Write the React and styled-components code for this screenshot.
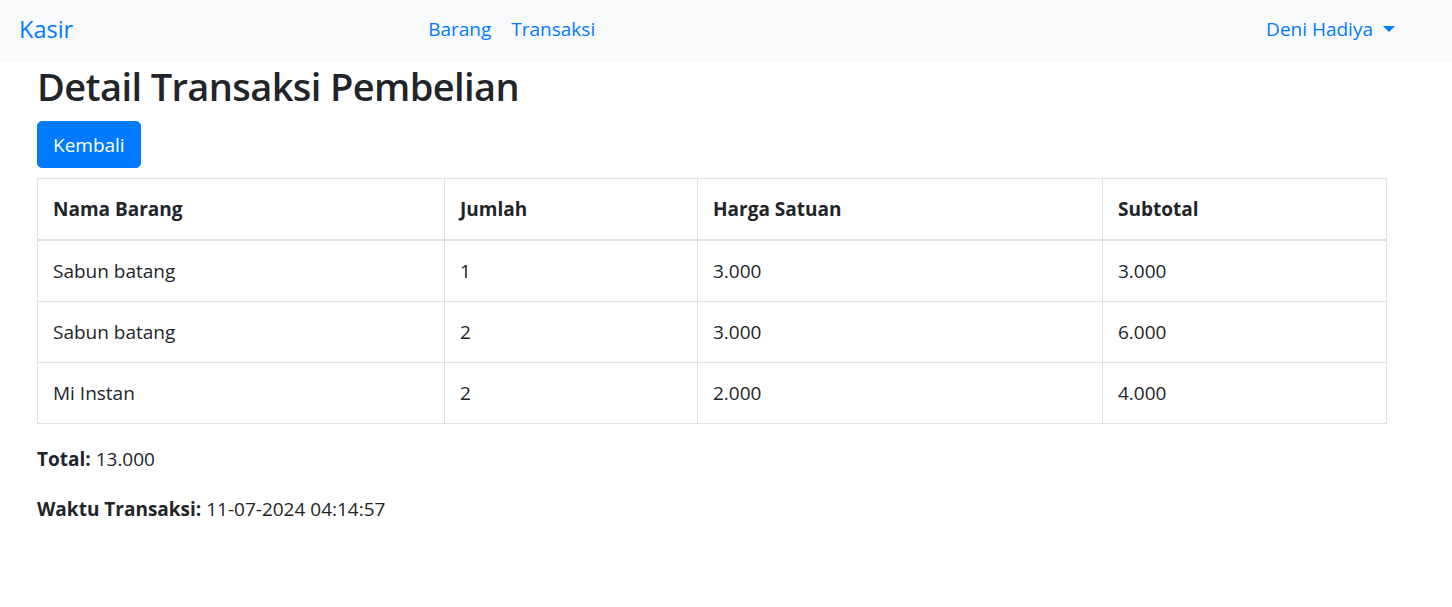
import React from 'react';
import styled, { createGlobalStyle } from 'styled-components';

const GlobalStyle = createGlobalStyle`
  body {
    margin: 0;
    font-family: 'Segoe UI', 'Open Sans', 'Noto Sans', Arial, sans-serif;
    font-size: 19px;
    line-height: 30px;
    color: #212529;
    background: #fff;
  }
`;

const Navbar = styled.nav`
  display: flex;
  align-items: center;
  height: 62px;
  padding: 0 20px 5px 19px;
  background: #f8f9fa;
  box-sizing: border-box;
`;

const Brand = styled.a`
  font-size: 23.5px;
  line-height: 36px;
  color: #007bff;
  text-decoration: none;
`;

const NavList = styled.ul`
  display: flex;
  list-style: none;
  margin: 0 0 0 ${(p) => p.offset || 0}px;
  padding: 0;
`;

const NavLink = styled.a`
  display: block;
  padding: 8px 10px;
  color: #007bff;
  text-decoration: none;
`;

const Dropdown = styled(NavLink)`
  margin-left: auto;
  margin-right: 27px;
  &::after {
    content: '';
    display: inline-block;
    margin-left: 10px;
    vertical-align: 4px;
    border-top: 6px solid;
    border-right: 6px solid transparent;
    border-left: 6px solid transparent;
  }
`;

const Main = styled.main`
  padding: 0 66px 0 37px;
`;

const Title = styled.h2`
  margin: 0 0 11px;
  font-size: 38px;
  font-weight: 600;
  letter-spacing: -0.6px;
  line-height: 48px;
`;

const Button = styled.button`
  display: inline-block;
  margin-bottom: 10px;
  padding: 7.5px 15px;
  font: inherit;
  line-height: 30px;
  color: #fff;
  background: #007bff;
  border: 1px solid #007bff;
  border-radius: 5px;
`;

const Table = styled.table`
  width: 100%;
  margin-bottom: 20px;
  table-layout: fixed;
  border-collapse: collapse;
  border: 1px solid #dee2e6;
`;

const Th = styled.th`
  box-sizing: border-box;
  width: ${(p) => p.w}px;
  padding: 15px;
  text-align: left;
  font-weight: 700;
  border: 1px solid #dee2e6;
  border-bottom: 2px solid #dee2e6;
`;

const Td = styled.td`
  padding: 15px;
  border: 1px solid #dee2e6;
`;

const Info = styled.p`
  margin: 0 0 20px;
`;

const rows = [
  ['Sabun batang', '1', '3.000', '3.000'],
  ['Sabun batang', '2', '3.000', '6.000'],
  ['Mi Instan', '2', '2.000', '4.000'],
];

export default function App() {
  return (
    <>
      <GlobalStyle />
      <Navbar>
        <Brand href="#">Kasir</Brand>
        <NavList offset={345}>
          <li><NavLink href="#">Barang</NavLink></li>
          <li><NavLink href="#">Transaksi</NavLink></li>
        </NavList>
        <Dropdown href="#">Deni Hadiya</Dropdown>
      </Navbar>
      <Main>
        <Title>Detail Transaksi Pembelian</Title>
        <Button type="button">Kembali</Button>
        <Table>
          <thead>
            <tr>
              <Th w={407}>Nama Barang</Th>
              <Th w={253}>Jumlah</Th>
              <Th w={405}>Harga Satuan</Th>
              <Th w={284}>Subtotal</Th>
            </tr>
          </thead>
          <tbody>
            {rows.map((r, i) => (
              <tr key={i}>
                {r.map((c, j) => (
                  <Td key={j}>{c}</Td>
                ))}
              </tr>
            ))}
          </tbody>
        </Table>
        <Info><strong>Total:</strong> 13.000</Info>
        <Info><strong>Waktu Transaksi:</strong> 11-07-2024 04:14:57</Info>
      </Main>
    </>
  );
}
